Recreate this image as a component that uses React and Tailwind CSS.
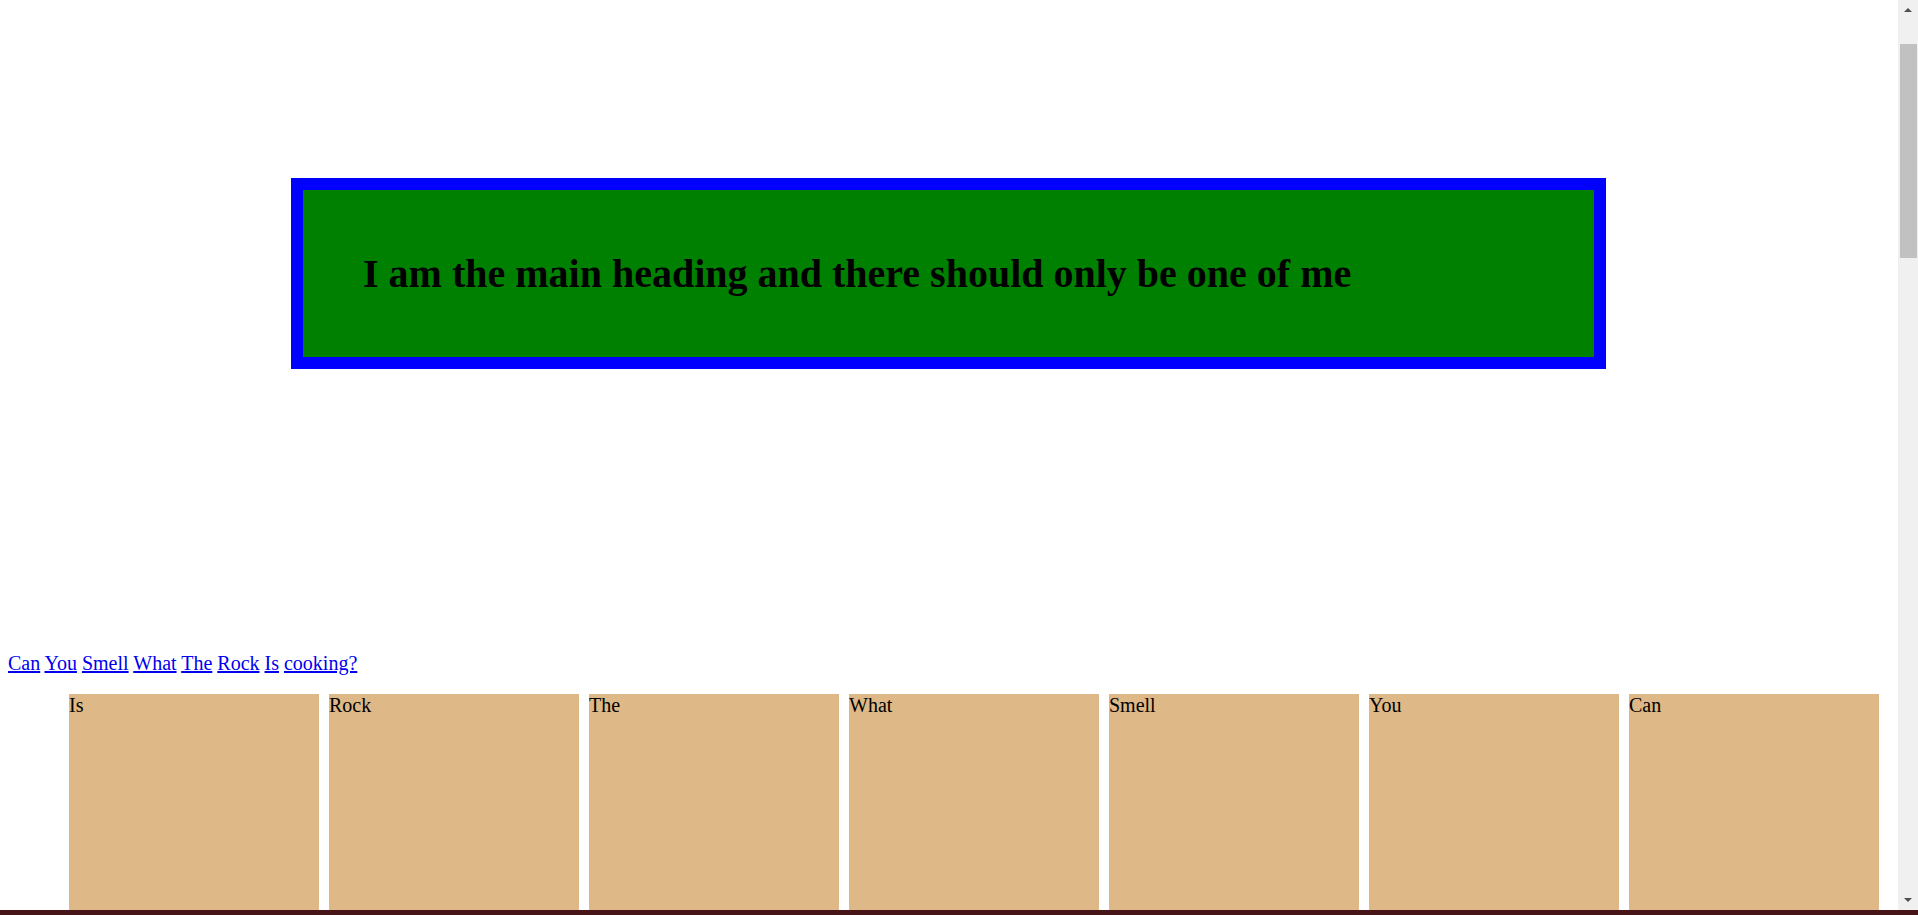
const words = ['Can', 'You', 'Smell', 'What', 'The', 'Rock', 'Is', 'cooking?'];
const boxes = ['Is', 'Rock', 'The', 'What', 'Smell', 'You', 'Can'];

export default function App() {
    return (
        <div className="min-h-[3725px] bg-white font-['Liberation_Serif',serif] text-black">
            {/* Main heading */}
            <div className="pt-[178px]">
                <div className="ml-[291px] flex h-[191px] w-[1315px] items-center border-[12px] border-[#0000ff] bg-[#008000] pl-[60px]">
                    <h1 className="text-[40px] font-bold leading-none">
                        I am the main heading and there should only be one of me
                    </h1>
                </div>
            </div>

            {/* Links */}
            <nav className="mt-[283px] pl-2 text-[20px] leading-[23px]">
                {words.map((w, i) => (
                    <span key={i}>
                        <a href="#" className="text-[#0000ee] underline">{w}</a>{i < words.length - 1 ? ' ' : ''}
                    </span>
                ))}
            </nav>

            {/* Boxes */}
            <div className="mt-[19px] flex gap-[10px] pl-[69px]">
                {boxes.map((b, i) => (
                    <div key={i} className="h-[250px] w-[250px] shrink-0 bg-[#deb887] text-[20px] leading-[23px]">
                        {b}
                    </div>
                ))}
            </div>

            {/* Window scrollbar */}
            <div className="fixed top-0 right-0 bottom-[5px] flex w-[20px] flex-col items-center bg-[#f0f0f0]">
                <div className="flex h-[20px] w-full items-center justify-center">
                    <div className="h-0 w-0 border-x-[4px] border-b-[4px] border-x-transparent border-b-[#505050]" />
                </div>
                <div className="mt-[24px] ml-[2px] h-[214px] w-[17px] self-start bg-[#c1c1c1]" />
                <div className="flex-1" />
                <div className="flex h-[20px] w-full items-center justify-center">
                    <div className="h-0 w-0 border-x-[4px] border-t-[4px] border-x-transparent border-t-[#505050]" />
                </div>
            </div>

            <div className="fixed bottom-0 left-0 right-0 h-[5px] bg-[#471517]" />
        </div>
    );
}
